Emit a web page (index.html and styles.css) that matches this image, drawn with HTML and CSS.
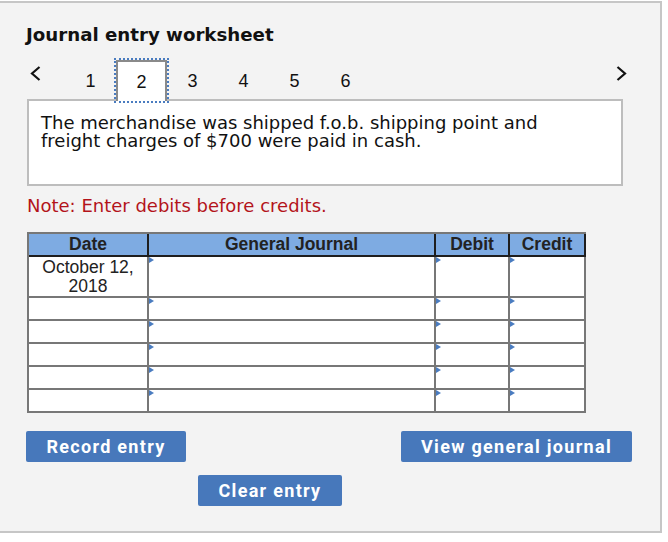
FILE: index.html
```html
<!DOCTYPE html>
<html lang="en">
<head>
<meta charset="utf-8">
<title>Journal entry worksheet</title>
<link rel="stylesheet" href="styles.css">
</head>
<body>
<div class="panel">
  <h1 class="title">Journal entry worksheet</h1>
  <div class="tabs">
    <span class="chev prev"><svg width="11" height="15" viewBox="0 0 11 15"><polyline points="9.5,1 2,7.5 9.5,14" fill="none" stroke="#111" stroke-width="2.2"/></svg></span>
    <span class="tab">1</span>
    <span class="tab active">2</span>
    <span class="tab">3</span>
    <span class="tab">4</span>
    <span class="tab">5</span>
    <span class="tab">6</span>
    <span class="chev next"><svg width="11" height="15" viewBox="0 0 11 15"><polyline points="1.5,1 9,7.5 1.5,14" fill="none" stroke="#111" stroke-width="2.2"/></svg></span>
  </div>
  <div class="question">The merchandise was shipped f.o.b. shipping point and<br>freight charges of $700 were paid in cash.</div>
  <p class="note">Note: Enter debits before credits.</p>
  <div class="journal">
    <div class="cell head">Date</div>
    <div class="cell head">General Journal</div>
    <div class="cell head">Debit</div>
    <div class="cell head">Credit</div>

    <div class="cell date">October 12,<br>2018</div>
    <div class="cell mark"></div>
    <div class="cell mark"></div>
    <div class="cell mark"></div>

    <div class="cell date"></div><div class="cell mark"></div><div class="cell mark"></div><div class="cell mark"></div>
    <div class="cell date"></div><div class="cell mark"></div><div class="cell mark"></div><div class="cell mark"></div>
    <div class="cell date"></div><div class="cell mark"></div><div class="cell mark"></div><div class="cell mark"></div>
    <div class="cell date"></div><div class="cell mark"></div><div class="cell mark"></div><div class="cell mark"></div>
    <div class="cell date"></div><div class="cell mark"></div><div class="cell mark"></div><div class="cell mark"></div>
  </div>
  <div class="actions">
    <button class="btn record">Record entry</button>
    <button class="btn view">View general journal</button>
  </div>
  <div class="actions2">
    <button class="btn clear">Clear entry</button>
  </div>
</div>
</body>
</html>
```
FILE: styles.css
```css
html, body {
  margin: 0;
  padding: 0;
  background: #ffffff;
}
.panel {
  margin-top: 1px;
  width: 660px;
  height: 528px;
  box-sizing: content-box;
  border: 2px solid #c6c6c6;
  border-left: none;
  background: #f3f3f3;
  padding: 0;
}
.title {
  margin: 0;
  padding: 21px 0 0 26px;
  font-family: "DejaVu Sans", Verdana, sans-serif;
  font-weight: bold;
  font-size: 18.2px;
  line-height: 22px;
  color: #111;
}
.tabs {
  display: flex;
  margin: 14px 0 -2px 27px;
  width: 601px;
  height: 41px;
  position: relative;
  z-index: 1;
}
.chev {
  display: block;
  height: 16px;
}
.prev {
  width: 38px;
  padding: 6px 0 0 3px;
  box-sizing: border-box;
}
.next {
  margin-left: auto;
  padding-top: 6px;
  width: 12px;
}
.tab {
  width: 51px;
  height: 41px;
  box-sizing: border-box;
  display: flex;
  align-items: center;
  justify-content: center;
  font-family: "Liberation Sans", Arial, sans-serif;
  font-size: 18px;
  line-height: 18px;
  color: #111;
}
.tab.active {
  border: 2px solid #8a8a8a;
  border-bottom: none;
  background: #ffffff;
  outline: 2px dotted #4a7cc0;
}
.question {
  margin: 0 37px 0 27px;
  height: 87px;
  box-sizing: border-box;
  border: 2px solid #bdbdbd;
  background: #ffffff;
  padding: 13px 12px 0;
  font-family: "DejaVu Sans", Verdana, sans-serif;
  font-size: 18px;
  line-height: 18px;
  color: #111;
}
.note {
  margin: 10px 0 0 27px;
  font-family: "DejaVu Sans", Verdana, sans-serif;
  font-size: 18px;
  line-height: 20px;
  color: #b3131b;
}
.journal {
  margin: 16px 0 0 27px;
  display: grid;
  grid-template-columns: 120px 287px 74px 76px;
  grid-template-rows: 23px 41px repeat(5, 23px);
  width: 559px;
  box-sizing: border-box;
  border-left: 2px solid #777777;
  border-top: 2px solid #777777;
}
.cell {
  box-sizing: border-box;
  border-right: 2px solid #777777;
  border-bottom: 2px solid #777777;
  background: #ffffff;
  font-family: "Liberation Sans", Arial, sans-serif;
  font-size: 17.5px;
  color: #222;
}
.cell.head {
  background: #7eabe2;
  border-bottom-color: #1e1e1e;
  border-right-color: #1e1e1e;
  font-weight: bold;
  text-align: center;
  line-height: 21px;
}
.cell.date {
  text-align: center;
  line-height: 19px;
  padding-top: 1px;
}
.cell.mark::before {
  content: "";
  display: block;
  width: 0;
  height: 0;
  border-left: 5px solid #4a7cc0;
  border-top: 3.5px solid transparent;
  border-bottom: 3.5px solid transparent;
}
.actions {
  display: flex;
  justify-content: space-between;
  margin: 18px 28px 0 26px;
}
.actions2 {
  margin: 13px 0 0 198px;
}
.btn {
  display: block;
  height: 31px;
  border: none;
  border-radius: 2px;
  background: #4778bb;
  color: #ffffff;
  font-family: Roboto, "Liberation Sans", sans-serif;
  font-weight: bold;
  font-size: 18px;
  letter-spacing: 1.3px;
  padding: 0;
  text-align: center;
}
.record { width: 160px; }
.view { width: 231px; }
.clear { width: 144px; }
```
